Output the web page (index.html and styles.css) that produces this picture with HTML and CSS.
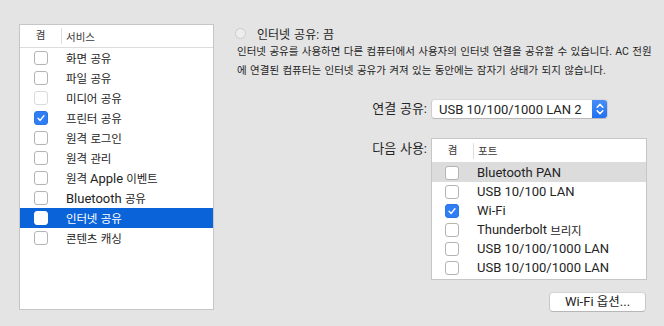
FILE: index.html
```html
<!DOCTYPE html>
<html lang="ko">
<head>
<meta charset="utf-8">
<title>공유</title>
<link rel="stylesheet" href="styles.css">
</head>
<body>
<div class="window">
  <section class="services">
    <div class="thead">
      <span class="col-on hk">켬</span>
      <span class="col-name hk">서비스</span>
    </div>
    <ul class="list">
      <li><span class="cb"></span><span class="k">화면 공유</span></li>
      <li><span class="cb"></span><span class="k">파일 공유</span></li>
      <li><span class="cb disabled"></span><span class="k">미디어 공유</span></li>
      <li><span class="cb on"><svg viewBox="0 0 14 14"><path d="M3.6 7.4 L6 9.8 L10.4 4.4"/></svg></span><span class="k">프린터 공유</span></li>
      <li><span class="cb"></span><span class="k">원격 로그인</span></li>
      <li><span class="cb"></span><span class="k">원격 관리</span></li>
      <li><span class="cb"></span><span class="k">원격</span>&nbsp;Apple&nbsp;<span class="k">이벤트</span></li>
      <li><span class="cb"></span>Bluetooth&nbsp;<span class="k">공유</span></li>
      <li class="sel"><span class="cb"></span><span class="k">인터넷 공유</span></li>
      <li><span class="cb"></span><span class="k">콘텐츠 캐싱</span></li>
    </ul>
  </section>

  <section class="detail">
    <div class="status">
      <span class="radio"></span>
      <span class="title">인터넷 공유: 끔</span>
    </div>
    <p class="desc">인터넷 공유를 사용하면 다른 컴퓨터에서 사용자의 인터넷 연결을 공유할 수 있습니다. AC 전원<br>에 연결된 컴퓨터는 인터넷 공유가 켜져 있는 동안에는 잠자기 상태가 되지 않습니다.</p>

    <div class="form">
      <span class="lbl">연결 공유:</span>
      <div class="popup">
        <span class="popup-text">USB 10/100/1000 LAN 2</span>
        <span class="stepper"><svg viewBox="0 0 16 20"><path d="M5.2 8.2 L8 5.4 L10.8 8.2"/><path d="M5.2 11.8 L8 14.6 L10.8 11.8"/></svg></span>
      </div>

      <span class="lbl lbl-top">다음 사용:</span>
      <div class="ports">
        <div class="thead">
          <span class="col-on hk">켬</span>
          <span class="col-name hk">포트</span>
        </div>
        <ul class="plist">
          <li class="hl"><span class="cb"></span>Bluetooth PAN</li>
          <li><span class="cb"></span>USB 10/100 LAN</li>
          <li><span class="cb on"><svg viewBox="0 0 14 14"><path d="M3.6 7.4 L6 9.8 L10.4 4.4"/></svg></span>Wi-Fi</li>
          <li><span class="cb"></span>Thunderbolt&nbsp;<span class="k">브리지</span></li>
          <li><span class="cb"></span>USB 10/100/1000 LAN</li>
          <li><span class="cb"></span>USB 10/100/1000 LAN</li>
        </ul>
      </div>

      <button class="btn" type="button">Wi-Fi <span class="kb">옵션</span>...</button>
    </div>
  </section>
</div>
</body>
</html>
```

FILE: styles.css
```css
* { box-sizing: border-box; }

html, body { margin: 0; padding: 0; }

body {
  width: 664px;
  height: 326px;
  overflow: hidden;
  background: #e4e4e4;
  font-family: "Roboto", "Noto Sans CJK KR", sans-serif;
  font-size: 13px;
  color: #242424;
}

.k {
  font-size: 11.5px;
  letter-spacing: -0.2px;
  word-spacing: 1px;
}

.kb {
  font-size: 12.5px;
}

.hk {
  font-size: 10.5px;
  color: #3a3a3a;
}

.window {
  display: flex;
  gap: 21px;
  padding: 24px 0 0 19px;
}

/* ---------- services list ---------- */
.services {
  width: 195px;
  height: 286px;
  flex: none;
  background: #fff;
  border: 1px solid #c6c6c6;
}

.thead {
  height: 23px;
  display: flex;
  align-items: center;
  border-bottom: 1px solid #dcdcdc;
}

.col-on {
  width: 42px;
  height: 16px;
  line-height: 16px;
  text-align: center;
  border-right: 1px solid #dedede;
}

.col-name {
  padding-left: 4px;
}

.list, .plist {
  list-style: none;
  margin: 0;
  padding: 0;
}

.list li {
  height: 20px;
  display: flex;
  align-items: center;
  padding-left: 14px;
  white-space: nowrap;
}

.list li .cb { margin-right: 18px; }

.list li.sel {
  background: #0a63d9;
  color: #fff;
}

.list li.sel .cb { border-color: #fff; }

/* ---------- checkbox ---------- */
.cb {
  width: 14px;
  height: 14px;
  flex: none;
  background: #fff;
  border: 1px solid #b4b4b4;
  border-radius: 3px;
  display: flex;
  align-items: center;
  justify-content: center;
}

.cb.disabled { border-color: #dadada; }

.cb.on {
  background: #2f7ef6;
  border-color: #2a74e6;
}

.cb svg {
  width: 14px;
  height: 14px;
  fill: none;
  stroke: #fff;
  stroke-width: 1.6;
  stroke-linecap: round;
  stroke-linejoin: round;
}

/* ---------- detail column ---------- */
.detail {
  width: 420px;
  display: flex;
  flex-direction: column;
}

.status {
  height: 16px;
  margin-top: 1px;
  display: flex;
  align-items: center;
  gap: 11px;
}

.radio {
  width: 11px;
  height: 11px;
  border-radius: 50%;
  background: #ededed;
  border: 1px solid #cdcdcd;
}

.title {
  font-size: 12px;
  word-spacing: 1px;
  color: #1e1e1e;
}

.desc {
  margin: 1px 0 0;
  padding-left: 2px;
  font-size: 10.5px;
  line-height: 19px;
  word-spacing: 0.8px;
  white-space: nowrap;
  color: #242424;
}

.form {
  display: grid;
  grid-template-columns: 192px 216px;
  column-gap: 4px;
  margin-top: 19px;
}

.lbl {
  font-size: 13px;
  word-spacing: 0.5px;
  text-align: right;
  align-self: center;
  line-height: 20px;
  white-space: nowrap;
}

.lbl-top {
  align-self: start;
  margin-top: 19px;
  padding-top: 1px;
}

/* popup button */
.popup {
  width: 177px;
  height: 20px;
  display: flex;
  align-items: center;
  background: #fff;
  border: 1px solid #cdcdcd;
  border-top-color: #d8d8d8;
  border-bottom-color: #bababa;
  border-radius: 4px;
  overflow: hidden;
}

.popup-text {
  flex: 1;
  padding-left: 7px;
  white-space: nowrap;
}

.stepper {
  width: 16px;
  height: 20px;
  margin: -1px -1px -1px 0;
  background: linear-gradient(#4990f8, #1d6ff2);
  border-radius: 0 4px 4px 0;
  display: flex;
}

.stepper svg {
  width: 16px;
  height: 20px;
  fill: none;
  stroke: #fff;
  stroke-width: 1.5;
  stroke-linecap: round;
  stroke-linejoin: round;
}

/* ports table */
.ports {
  margin-top: 19px;
  width: 216px;
  height: 142px;
  background: #fff;
  border: 1px solid #c6c6c6;
}

.ports .thead { height: 24px; }

.plist li {
  height: 19px;
  display: flex;
  align-items: center;
  padding-left: 13px;
  white-space: nowrap;
}

.plist li .cb { margin-right: 18px; }

.plist li.hl { background: #dcdcdc; }

/* button */
.btn {
  grid-column: 2;
  justify-self: end;
  margin: 12px 1px 0 0;
  width: 97px;
  height: 20px;
  padding: 0;
  background: #fff;
  border: 1px solid #c8c8c8;
  border-top-color: #d4d4d4;
  border-bottom-color: #b6b6b6;
  border-radius: 4px;
  font-family: inherit;
  font-size: 13px;
  color: #242424;
  line-height: 18px;
  white-space: nowrap;
}
```
